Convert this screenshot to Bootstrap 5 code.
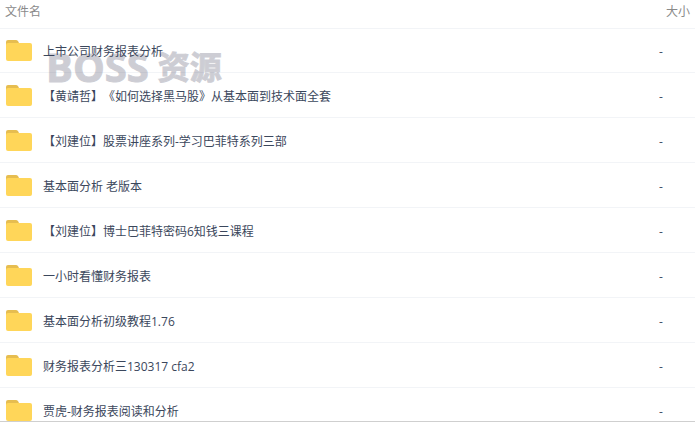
<!DOCTYPE html>
<html lang="zh-CN">
<head>
<meta charset="utf-8">
<meta name="viewport" content="width=device-width, initial-scale=1">
<title>文件列表</title>
<link href="https://cdn.jsdelivr.net/npm/bootstrap@5.3.0/dist/css/bootstrap.min.css" rel="stylesheet">
<style>
body { font-family: "Open Sans", "Noto Sans CJK SC", sans-serif; font-size: 12px; line-height: 18px; color: #424e67; background: #fff; text-spacing-trim: space-all; font-feature-settings: "chws" 0; }
.file-panel { border-bottom: 1px solid #cfcfcf; }
.file-table { --bs-table-bg: transparent; border-color: #f2f4f7; }
.file-table th { height: 28px; padding: 2px 5px 7px; font-weight: 400; color: #8a8a8a; }
.file-table td { height: 45px; padding: 2px 5px 0; color: #424e67; }
.file-table tbody tr:first-child td { height: 44px; }
.size-col { width: 41px; }
.file-table .size-head { text-align: right; }
.file-table .size-cell { padding-top: 4px; }
.file-link { color: #3b475c; gap: 11px; }
.file-link span { padding-top: 2px; }
.folder { width: 27px; height: 22px; }
.watermark { left: 46px; top: 47px; gap: 9px; color: #3e3e58; opacity: .25; font-size: 40px; line-height: 40px; font-weight: 700; -webkit-text-stroke: 1px #3e3e58; }
.watermark-cn { font-family: "Noto Sans CJK SC", sans-serif; font-size: 32px; margin-top: -4px; }
</style>
</head>
<body>
<svg class="d-none" aria-hidden="true">
  <symbol id="folder" viewBox="0 0 27 22">
    <path d="M1 9V2Q1 0 3 0H11Q12 0 13 1L14 3V9Z" fill="#e6bd50"/>
    <rect x="1" y="3" width="26" height="18" rx="2" fill="#ffd659"/>
  </symbol>
</svg>
<main class="file-panel position-relative vh-100 overflow-hidden">
  <table class="table file-table align-middle mb-0">
    <thead><tr><th scope="col">文件名</th><th scope="col" class="size-col size-head text-nowrap">大小</th></tr></thead>
    <tbody>
      <tr><td><a href="#" class="file-link d-flex align-items-center text-decoration-none"><svg class="folder flex-shrink-0" aria-hidden="true"><use href="#folder"/></svg><span>上市公司财务报表分析</span></a></td><td class="size-cell">-</td></tr>
      <tr><td><a href="#" class="file-link d-flex align-items-center text-decoration-none"><svg class="folder flex-shrink-0" aria-hidden="true"><use href="#folder"/></svg><span>【黄靖哲】《如何选择黑马股》从基本面到技术面全套</span></a></td><td class="size-cell">-</td></tr>
      <tr><td><a href="#" class="file-link d-flex align-items-center text-decoration-none"><svg class="folder flex-shrink-0" aria-hidden="true"><use href="#folder"/></svg><span>【刘建位】股票讲座系列-学习巴菲特系列三部</span></a></td><td class="size-cell">-</td></tr>
      <tr><td><a href="#" class="file-link d-flex align-items-center text-decoration-none"><svg class="folder flex-shrink-0" aria-hidden="true"><use href="#folder"/></svg><span>基本面分析 老版本</span></a></td><td class="size-cell">-</td></tr>
      <tr><td><a href="#" class="file-link d-flex align-items-center text-decoration-none"><svg class="folder flex-shrink-0" aria-hidden="true"><use href="#folder"/></svg><span>【刘建位】博士巴菲特密码6知钱三课程</span></a></td><td class="size-cell">-</td></tr>
      <tr><td><a href="#" class="file-link d-flex align-items-center text-decoration-none"><svg class="folder flex-shrink-0" aria-hidden="true"><use href="#folder"/></svg><span>一小时看懂财务报表</span></a></td><td class="size-cell">-</td></tr>
      <tr><td><a href="#" class="file-link d-flex align-items-center text-decoration-none"><svg class="folder flex-shrink-0" aria-hidden="true"><use href="#folder"/></svg><span>基本面分析初级教程1.76</span></a></td><td class="size-cell">-</td></tr>
      <tr><td><a href="#" class="file-link d-flex align-items-center text-decoration-none"><svg class="folder flex-shrink-0" aria-hidden="true"><use href="#folder"/></svg><span>财务报表分析三130317 cfa2</span></a></td><td class="size-cell">-</td></tr>
      <tr><td><a href="#" class="file-link d-flex align-items-center text-decoration-none"><svg class="folder flex-shrink-0" aria-hidden="true"><use href="#folder"/></svg><span>贾虎-财务报表阅读和分析</span></a></td><td class="size-cell">-</td></tr>
    </tbody>
  </table>
  <div class="watermark position-absolute d-flex align-items-center pe-none"><span>BOSS</span><span class="watermark-cn">资源</span></div>
</main>
<script src="https://cdn.jsdelivr.net/npm/bootstrap@5.3.0/dist/js/bootstrap.bundle.min.js"></script>
</body>
</html>
